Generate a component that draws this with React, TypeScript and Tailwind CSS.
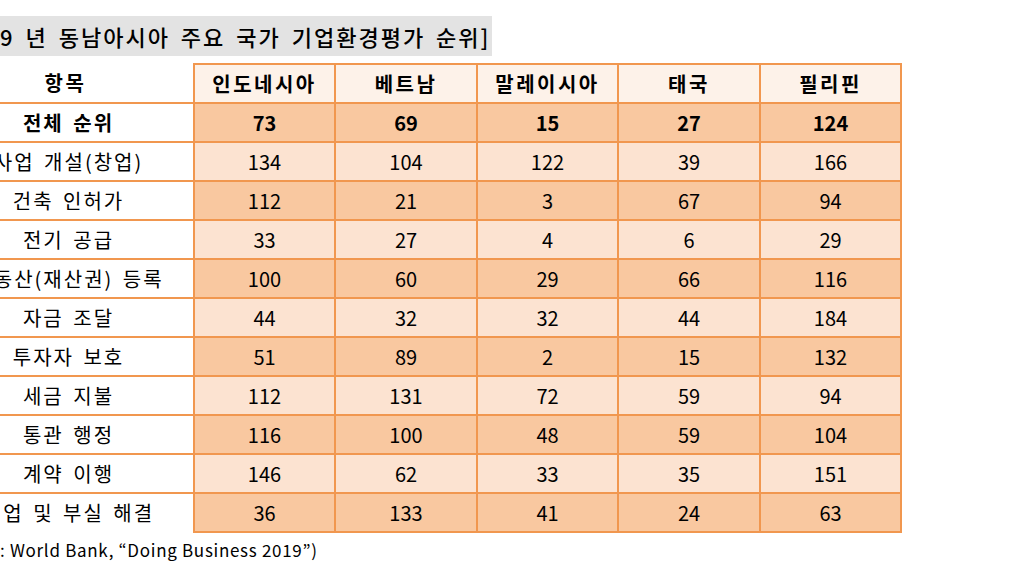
const COUNTRIES = ["인도네시아", "베트남", "말레이시아", "태국", "필리핀"];

const ROWS: { label: string; values: number[]; bold?: boolean }[] = [
  { label: "전체 순위", values: [73, 69, 15, 27, 124], bold: true },
  { label: "사업 개설(창업)", values: [134, 104, 122, 39, 166] },
  { label: "건축 인허가", values: [112, 21, 3, 67, 94] },
  { label: "전기 공급", values: [33, 27, 4, 6, 29] },
  { label: "부동산(재산권) 등록", values: [100, 60, 29, 66, 116] },
  { label: "자금 조달", values: [44, 32, 32, 44, 184] },
  { label: "투자자 보호", values: [51, 89, 2, 15, 132] },
  { label: "세금 지불", values: [112, 131, 72, 59, 94] },
  { label: "통관 행정", values: [116, 100, 48, 59, 104] },
  { label: "계약 이행", values: [146, 62, 33, 35, 151] },
  { label: "기업 및 부실 해결", values: [36, 133, 41, 24, 63] },
];

const WIDTHS = ["w-[141px]", "w-[142px]", "w-[141px]", "w-[142px]", "w-[141px]"];

export default function App() {
  return (
    <div
      className="w-[1021px] h-[580px] overflow-hidden bg-white text-black"
      style={{ fontFamily: '"Noto Sans CJK KR", "Noto Sans", sans-serif' }}
    >
      <div className="pt-4">
        <div className="w-[492px] h-10 bg-[#e3e3e3] flex items-center text-[22px] font-medium tracking-[2px] [word-spacing:4px] whitespace-nowrap overflow-hidden">
          9 년 동남아시아 주요 국가 기업환경평가 순위]
        </div>
      </div>

      <table className="mt-[7px] ml-[-62px] border-collapse text-[20px] leading-none">
        <thead>
          <tr className="h-[39px]">
            <th className="w-[256px] border-b-2 border-[#f1974f] font-bold text-center tracking-[2.5px]">항목</th>
            {COUNTRIES.map((c, i) => (
              <th
                key={c}
                className={`${WIDTHS[i]} border-2 border-[#f1974f] bg-[#fdf2e9] font-bold text-center tracking-[2.5px]`}
              >
                {c}
              </th>
            ))}
          </tr>
        </thead>
        <tbody>
          {ROWS.map((row, r) => {
            const last = r === ROWS.length - 1;
            const bg = r % 2 === 0 ? "bg-[#f9c8a0]" : "bg-[#fce3d1]";
            return (
              <tr key={row.label} className="h-[39px]">
                <td
                  className={`pl-[6px] text-center whitespace-nowrap tracking-[2px] [word-spacing:3px] border-[#f1974f] ${
                    last ? "" : "border-b-2"
                  } ${row.bold ? "font-bold" : ""}`}
                >
                  {row.label}
                </td>
                {row.values.map((v, i) => (
                  <td
                    key={i}
                    className={`border-2 border-[#f1974f] ${bg} text-center ${row.bold ? "font-bold" : ""}`}
                  >
                    {v}
                  </td>
                ))}
              </tr>
            );
          })}
        </tbody>
      </table>

      <div className="mt-[4px] text-[17px] tracking-[0.7px] whitespace-nowrap">
        : World Bank, “Doing Business 2019”)
      </div>
    </div>
  );
}
